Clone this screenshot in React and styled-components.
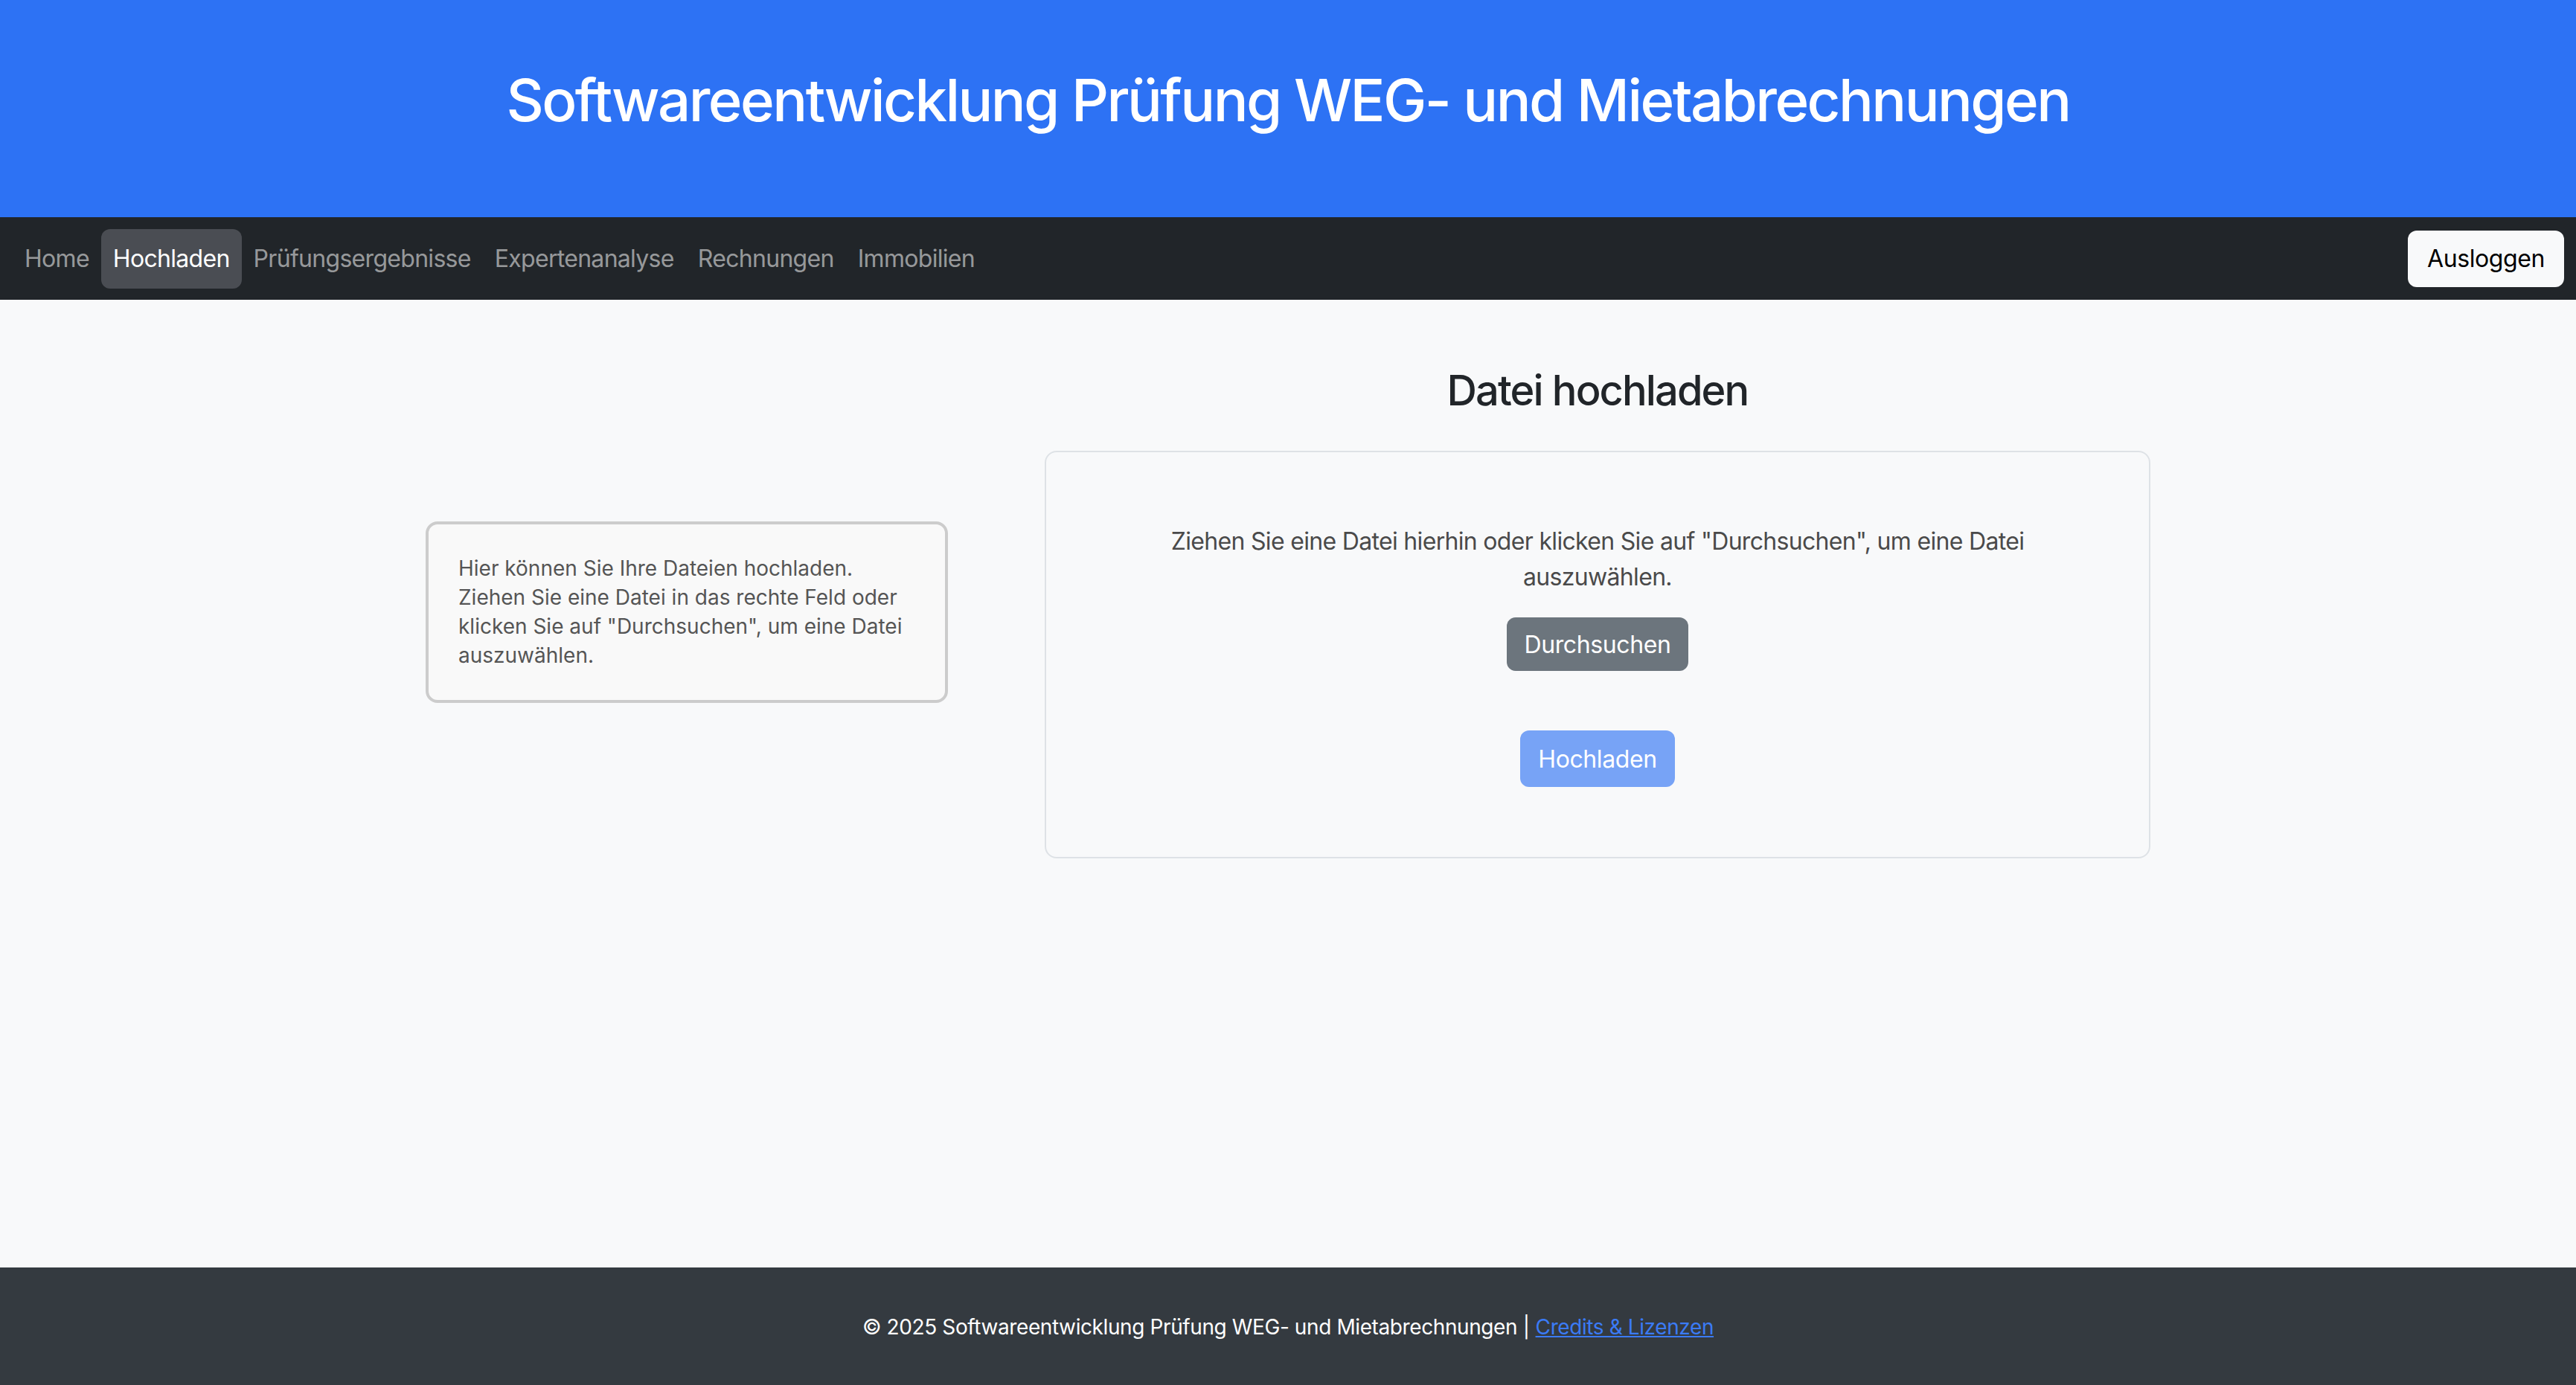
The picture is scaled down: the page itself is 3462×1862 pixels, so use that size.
import React from 'react';
import styled, { createGlobalStyle } from 'styled-components';

const GlobalStyle = createGlobalStyle`
  html, body {
    margin: 0;
    padding: 0;
  }

  body {
    font-family: Inter, "Noto Sans", "Liberation Sans", sans-serif;
    background: #f8f9fa;
    color: #212529;
  }

  * {
    box-sizing: border-box;
  }
`;

const Page = styled.div`
  min-height: 100vh;
  display: flex;
  flex-direction: column;
`;

const Header = styled.header`
  background: #2d72f4;
  color: #fff;
  height: 292px;
  display: flex;
  align-items: center;
  justify-content: center;
  padding-bottom: 22px;

  h1 {
    margin: 0;
    font-size: 78px;
    font-weight: 500;
    line-height: 1.2;
    letter-spacing: -2.6px;
  }
`;

const Navbar = styled.nav`
  background: #212529;
  height: 111px;
  display: flex;
  align-items: center;
  justify-content: space-between;
  padding: 0 16px 0 17px;
`;

const NavList = styled.ul`
  display: flex;
  list-style: none;
  margin: 0;
  padding: 0;
`;

const NavLink = styled.a`
  display: block;
  padding: 16px;
  font-size: 32px;
  line-height: 48px;
  letter-spacing: -0.7px;
  border-radius: 12px;
  text-decoration: none;
  color: ${(p) => (p.$active ? '#fff' : 'rgba(255, 255, 255, 0.55)')};
  background: ${(p) => (p.$active ? '#4a4d53' : 'transparent')};
`;

const LogoutButton = styled.button`
  height: 76px;
  padding: 0 26px;
  border: none;
  border-radius: 12px;
  background: #f8f9fa;
  color: #000;
  font-family: inherit;
  font-size: 32px;
  letter-spacing: -0.4px;
`;

const Main = styled.main`
  flex: 1;
  display: flex;
  justify-content: center;
  align-items: flex-start;
  padding-top: 89px;
`;

const Row = styled.div`
  display: flex;
  align-items: center;
  gap: 130px;
`;

const InfoBox = styled.div`
  width: 702px;
  padding: 40px;
  border: 4px solid #cccccc;
  border-radius: 16px;
  background: #f9f9f9;
  color: #555;
  font-size: 28px;
  line-height: 1.4;
`;

const UploadColumn = styled.section`
  width: 1486px;

  h2 {
    margin: 0 0 47px;
    text-align: center;
    font-size: 56px;
    font-weight: 500;
    line-height: 1.2;
    letter-spacing: -1.9px;
    color: #212529;
  }
`;

const DropZone = styled.div`
  border: 2px solid #dee2e6;
  border-radius: 16px;
  padding: 96px 40px 94px;
  display: flex;
  flex-direction: column;
  align-items: center;

  p {
    margin: 0 0 30px;
    text-align: center;
    font-size: 32px;
    line-height: 48px;
    letter-spacing: -0.68px;
    color: #4a4a4a;
  }
`;

const Button = styled.button`
  height: ${(p) => p.$height}px;
  padding: 0 24px;
  border: none;
  border-radius: 12px;
  font-family: inherit;
  font-size: 32px;
  letter-spacing: -0.4px;
  color: #fff;
  background: ${(p) => p.$bg};
  margin-top: ${(p) => p.$top || 0}px;
`;

const Footer = styled.footer`
  height: 158px;
  background: #343a40;
  color: #fff;
  display: flex;
  align-items: center;
  justify-content: center;
  font-size: 28px;
  letter-spacing: -0.4px;
  padding-top: 2px;

  a {
    color: #3b7bf5;
    text-decoration: underline;
    margin-left: 8px;
  }
`;

const links = ['Home', 'Hochladen', 'Prüfungsergebnisse', 'Expertenanalyse', 'Rechnungen', 'Immobilien'];

const App = () => (
  <Page>
    <GlobalStyle />
    <Header>
      <h1>Softwareentwicklung Prüfung WEG- und Mietabrechnungen</h1>
    </Header>
    <Navbar>
      <NavList>
        {links.map((label) => (
          <li key={label}>
            <NavLink href="#" $active={label === 'Hochladen'}>
              {label}
            </NavLink>
          </li>
        ))}
      </NavList>
      <LogoutButton>Ausloggen</LogoutButton>
    </Navbar>
    <Main>
      <Row>
        <InfoBox>
          Hier können Sie Ihre Dateien hochladen.
          <br />
          Ziehen Sie eine Datei in das rechte Feld oder
          <br />
          klicken Sie auf "Durchsuchen", um eine Datei
          <br />
          auszuwählen.
        </InfoBox>
        <UploadColumn>
          <h2>Datei hochladen</h2>
          <DropZone>
            <p>
              Ziehen Sie eine Datei hierhin oder klicken Sie auf "Durchsuchen", um eine Datei
              <br />
              auszuwählen.
            </p>
            <Button $bg="#6c757d" $height={72}>
              Durchsuchen
            </Button>
            <Button $bg="#77a3f6" $height={76} $top={80}>
              Hochladen
            </Button>
          </DropZone>
        </UploadColumn>
      </Row>
    </Main>
    <Footer>
      © 2025 Softwareentwicklung Prüfung WEG- und Mietabrechnungen |<a href="#">Credits &amp; Lizenzen</a>
    </Footer>
  </Page>
);

export default App;
